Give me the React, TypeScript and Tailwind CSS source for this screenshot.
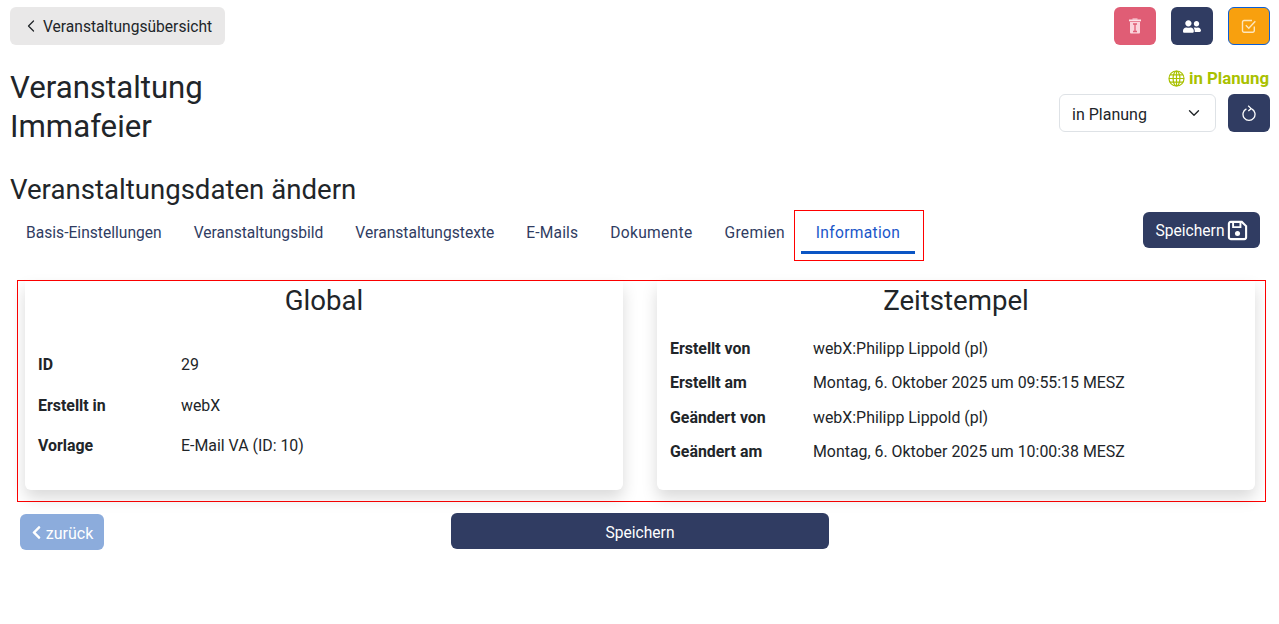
import React from "react";
import { FaChevronLeft, FaUserFriends } from "react-icons/fa";
import { LuChevronLeft, LuChevronDown } from "react-icons/lu";

const tabs = [
  { label: "Basis-Einstellungen", cls: "tracking-[0.01px]" },
  { label: "Veranstaltungsbild", cls: "" },
  { label: "Veranstaltungstexte", cls: "" },
  { label: "E-Mails", cls: "tracking-[0.15px]" },
  { label: "Dokumente", cls: "tracking-[0.3px]" },
  { label: "Gremien", cls: "tracking-[0.3px]" },
];

function Row({ label, value, className }: { label: string; value: string; className: string }) {
  return (
    <div className={`flex ${className}`}>
      <div className="w-[143px] shrink-0 font-bold">{label}</div>
      <div>{value}</div>
    </div>
  );
}

const TrashIcon = () => (
  <svg width="14" height="16" viewBox="0 0 14 16" fill="none">
    <path d="M1 1.5h12v1.8H1z" fill="#fde3e8" />
    <path d="M4.5 0.5h5v1h-5z" fill="#fde3e8" />
    <path d="M2 4h10v10.5a1 1 0 0 1-1 1H3a1 1 0 0 1-1-1z" fill="#fbd5dc" />
    <path d="M5 6h4M7 6v7.5M5 13.5h4" stroke="#e05d75" strokeWidth="1.3" />
  </svg>
);

const CheckIcon = () => (
  <svg width="16" height="16" viewBox="0 0 16 16" fill="none" stroke="#fde6bd" strokeWidth="1.4">
    <path d="M13.3 8.5v4.3a1.5 1.5 0 0 1-1.5 1.5H3a1.5 1.5 0 0 1-1.5-1.5V4A1.5 1.5 0 0 1 3 2.5h8" />
    <path d="M4.8 7.2l3 3 6.5-7" />
  </svg>
);

const GlobeIcon = () => (
  <svg width="17" height="17" viewBox="0 0 17 17" fill="none" stroke="#a9c100" strokeWidth="1.2">
    <circle cx="8.5" cy="8.5" r="7.5" />
    <ellipse cx="8.5" cy="8.5" rx="3.4" ry="7.5" />
    <path d="M8.5 1v15M1 8.5h15M2 4.8h13M2 12.2h13" />
  </svg>
);

const RefreshIcon = () => (
  <svg width="14" height="16" viewBox="0 0 14 16" fill="none" stroke="white" strokeWidth="1.3">
    <path d="M4.4 3.9a6 6 0 1 0 5.2 0" />
    <path d="M6.2 0.8 9.2 3.6 6.3 6" />
  </svg>
);

const SaveIcon = () => (
  <svg width="21" height="21" viewBox="0 0 20 20" fill="none">
    <path d="M3.5 1.8h10.6l4.1 4v10.7a1.7 1.7 0 0 1-1.7 1.7H3.5a1.7 1.7 0 0 1-1.7-1.7V3.5a1.7 1.7 0 0 1 1.7-1.7z" stroke="white" strokeWidth="2" />
    <path d="M5.8 2.5v4.3h7V2.5" stroke="white" strokeWidth="1.8" />
    <circle cx="10" cy="12.8" r="2.4" fill="white" />
  </svg>
);

export default function App() {
  return (
    <div className="h-[624px] w-[1279px] overflow-hidden bg-white pt-[7px] pr-[9px] pl-[10px] text-[15.9px] leading-[22px] text-[#212529] [font-family:Roboto,sans-serif]">
      <div className="flex items-start justify-between">
        <button className="flex h-[38px] w-[215px] items-center rounded-[6px] bg-[#e9e8e8] pt-[2px] pl-[11px] text-[15.6px]">
          <LuChevronLeft className="mt-[-2px] mr-[2px] h-[20px] w-[20px] stroke-[1.5]" />
          Veranstaltungsübersicht
        </button>
        <div className="flex gap-[15px]">
          <button className="flex h-[38px] w-[42px] items-center justify-center rounded-[6px] bg-[#e05d75]">
            <TrashIcon />
          </button>
          <button className="flex h-[38px] w-[42px] items-center justify-center rounded-[6px] bg-[#303c62] text-white">
            <FaUserFriends className="h-[17px] w-[18px]" />
          </button>
          <button className="flex h-[38px] w-[42px] items-center justify-center rounded-[6px] border border-[#0b5ed7] bg-[#f8a00e]">
            <CheckIcon />
          </button>
        </div>
      </div>

      <div className="flex items-start justify-between">
        <h1 className="mt-[23px] text-[31.2px] leading-[39px] font-normal">
          Veranstaltung
          <br />
          Immafeier
        </h1>
        <div className="mt-[22px] flex flex-col items-end">
          <div className="flex h-[22px] items-center gap-[4px] pr-[1px] text-[16.8px] font-bold text-[#a9c100]">
            <GlobeIcon />
            in Planung
          </div>
          <div className="mt-[5px] flex gap-[12px]">
            <div className="flex h-[38px] w-[157px] items-center justify-between rounded-[6px] border border-[#dee2e6] pr-[12px] pl-[12px] text-[16px]">
              <span className="pt-[4px]">in Planung</span>
              <LuChevronDown className="h-[18px] w-[18px] stroke-[1.8]" />
            </div>
            <button className="flex h-[38px] w-[42px] items-center justify-center rounded-[6px] bg-[#303c62]">
              <RefreshIcon />
            </button>
          </div>
        </div>
      </div>

      <h2 className="mt-[28px] text-[27.6px] leading-[32px] font-normal">Veranstaltungsdaten ändern</h2>

      <div className="mt-[6px] flex items-start justify-between pr-[10px]">
        <div className="flex">
          {tabs.map((t) => (
            <div key={t.label} className={`flex h-[42px] items-center px-[16px] text-[15.6px] text-[#303c62] ${t.cls}`}>
              {t.label}
            </div>
          ))}
          <div className="relative flex h-[42px] w-[114px] items-center justify-center border-b-[3px] border-[#0a55c4] pt-[3px] text-[15.6px] tracking-[0.3px] text-[#1a56c9]">
            Information
            <div className="absolute top-[-2px] right-[-9px] bottom-[-10px] left-[-7px] border border-[#f00]" />
          </div>
        </div>
        <button className="flex h-[36px] w-[117px] items-center justify-center gap-[2px] rounded-[6px] bg-[#303c62] text-[15.6px] text-white">
          <span className="pt-[2px]">Speichern</span>
          <SaveIcon />
        </button>
      </div>

      <div className="mt-[26px] ml-[7px] flex h-[222px] w-[1249px] gap-[34px] border border-[#f00] pr-[10px] pl-[7px]">
        <div className="h-[209px] w-[598px] rounded-b-[6px] bg-white px-[13px] shadow-[0_8px_16px_rgba(0,0,0,0.15)]">
          <div className="h-[39px] text-center text-[27.6px] leading-[40px]">Global</div>
          <Row label="ID" value="29" className="mt-[34px]" />
          <Row label="Erstellt in" value="webX" className="mt-[19px]" />
          <Row label="Vorlage" value="E-Mail VA (ID: 10)" className="mt-[18px]" />
        </div>
        <div className="h-[209px] w-[598px] rounded-b-[6px] bg-white px-[13px] shadow-[0_8px_16px_rgba(0,0,0,0.15)]">
          <div className="h-[39px] text-center text-[27.6px] leading-[40px]">Zeitstempel</div>
          <Row label="Erstellt von" value="webX:Philipp Lippold (pl)" className="mt-[18px]" />
          <Row label="Erstellt am" value="Montag, 6. Oktober 2025 um 09:55:15 MESZ" className="mt-[12px]" />
          <Row label="Geändert von" value="webX:Philipp Lippold (pl)" className="mt-[13px]" />
          <Row label="Geändert am" value="Montag, 6. Oktober 2025 um 10:00:38 MESZ" className="mt-[12px]" />
        </div>
      </div>

      <div className="relative mt-[11px] ml-[10px] flex w-[809px] items-start justify-between">
        <button className="mt-[1px] flex h-[36px] w-[84px] items-center justify-center gap-[4px] rounded-[6px] bg-[#8cacdc] pt-[4px] text-[16px] text-white">
          <FaChevronLeft className="mt-[-4px] h-[15px] w-[11px]" />
          zurück
        </button>
        <button className="flex h-[36px] w-[378px] items-center justify-center rounded-[6px] bg-[#303c62] pt-[4px] text-[15.6px] text-white">
          Speichern
        </button>
      </div>
    </div>
  );
}
